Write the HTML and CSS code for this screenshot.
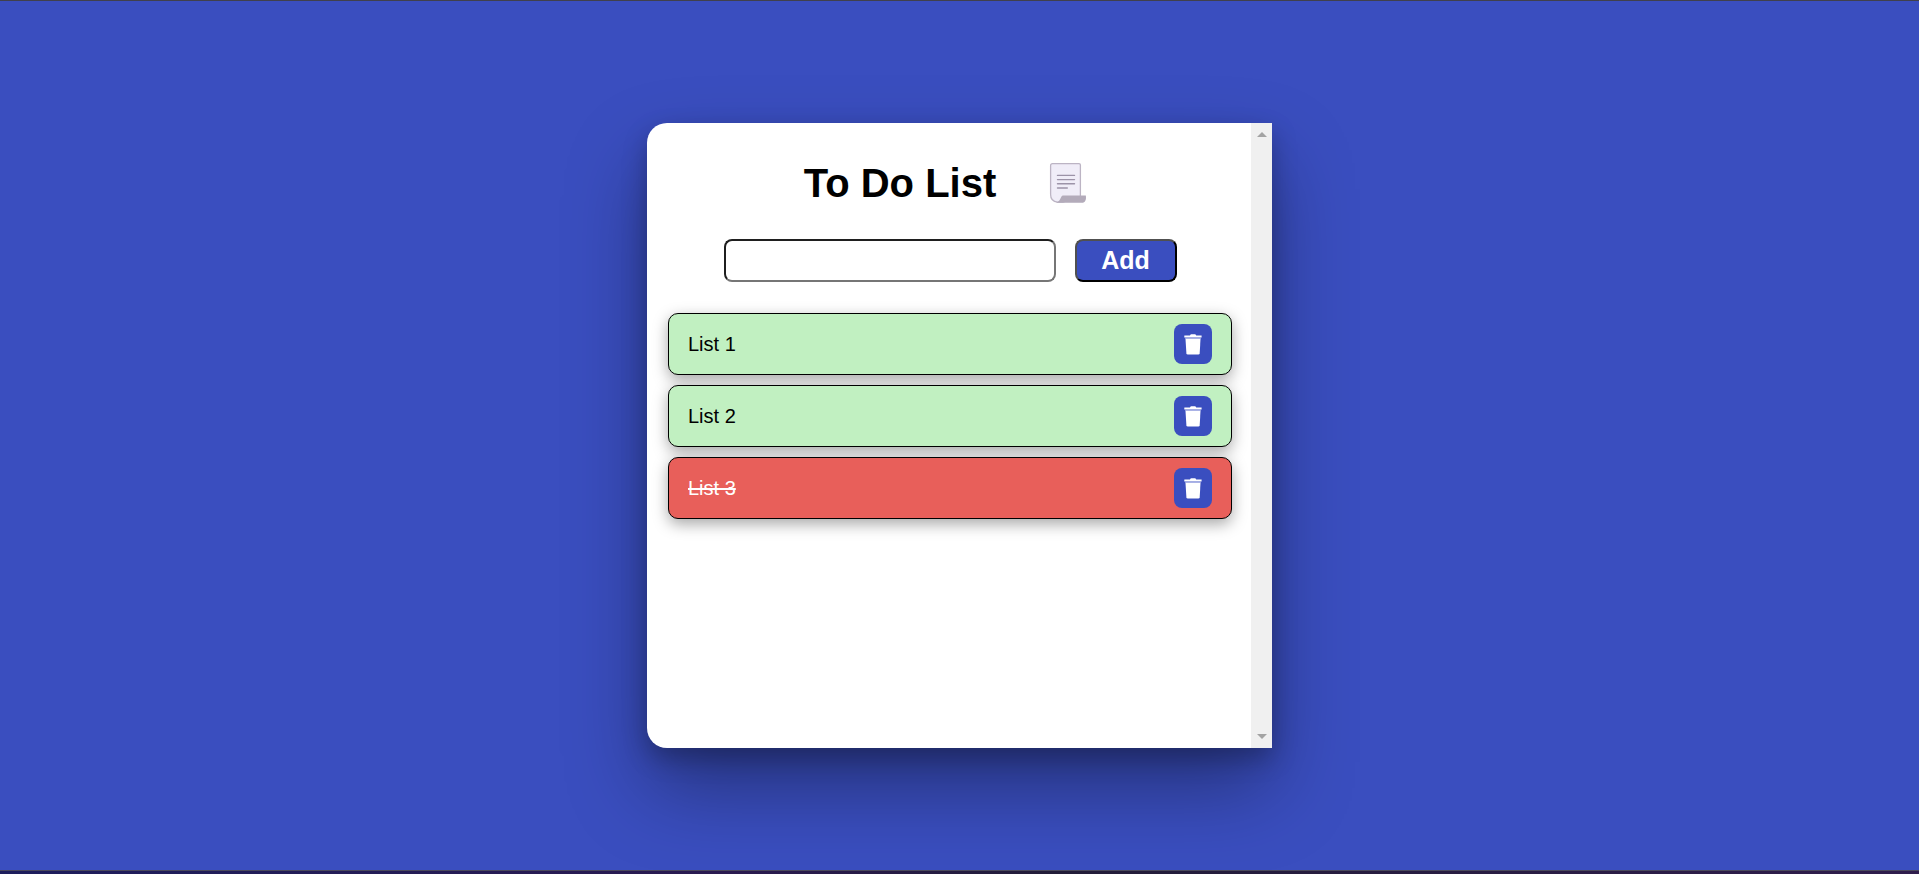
FILE: index.html
```html
<!DOCTYPE html>
<html lang="en">
<head>
<meta charset="utf-8">
<meta name="viewport" content="width=device-width, initial-scale=1">
<title>To Do List</title>
<link rel="stylesheet" href="styles.css">
</head>
<body>
<svg class="sprite" aria-hidden="true">
  <symbol id="trash" viewBox="0 0 18 21">
    <path d="M0.500 1.500H6Q6.400 0.300 7.400 0.300H10.800Q11.800 0.300 12.200 1.500H17.600V3.500H0.300V1.800Z" fill="#fff"/>
    <path d="M1.200 3.500H16.800V5H1.200Z" fill="#aab2e6"/>
    <path d="M1.500 5H16.500L15.700 19.200Q15.600 20.500 14.300 20.500H3.800Q2.500 20.500 2.400 19.200Z" fill="#fff"/>
  </symbol>
</svg>
<main class="page">
  <section class="card">
    <div class="content">
      <header class="title">
        <h1 class="heading">To Do List</h1>
        <svg class="scroll-icon" viewBox="0 0 50 50" aria-hidden="true">
          <path d="M6.600 5.600H33Q34.400 5.600 34.400 7V38.500L17 44.200H11.500Q4.600 43.500 4.600 36.500V7.600Q4.600 5.600 6.600 5.600Z" fill="#f0edf8" stroke="#bcb4c4" stroke-width="1.300"/>
          <path d="M10 44.300C14.500 44.300 14.500 37.400 17 37.400H39.800C40.600 41.500 39 44.800 36 44.800H11Z" fill="#b3abba"/>
          <path d="M11.500 17.400H28.500M11.500 21.600H28.500M11.500 25.700H28.500M11.500 30H21.300" stroke="#9c93a8" stroke-width="1.400" stroke-linecap="round"/>
        </svg>
      </header>
      <form class="add-form">
        <input class="task-input" type="text" aria-label="New task">
        <button class="add-button" type="button">Add</button>
      </form>
      <ul class="tasks">
        <li class="task">
          <span>List 1</span>
          <button class="delete" type="button" aria-label="Delete List 1"><svg class="trash"><use href="#trash"/></svg></button>
        </li>
        <li class="task">
          <span>List 2</span>
          <button class="delete" type="button" aria-label="Delete List 2"><svg class="trash"><use href="#trash"/></svg></button>
        </li>
        <li class="task done">
          <span>List 3</span>
          <button class="delete" type="button" aria-label="Delete List 3"><svg class="trash"><use href="#trash"/></svg></button>
        </li>
      </ul>
    </div>
    <div class="scrollbar" aria-hidden="true">
      <svg class="arrow" viewBox="0 0 10 5"><path d="M0 5L5 0L10 5Z"/></svg>
      <svg class="arrow" viewBox="0 0 10 5"><path d="M0 0L5 5L10 0Z"/></svg>
    </div>
  </section>
</main>
<div class="bottom-edge"></div>
</body>
</html>
```

FILE: styles.css
```css
* {
  box-sizing: border-box;
}

body {
  margin: 0;
  min-height: 100vh;
  display: flex;
  flex-direction: column;
  border-top: 1px solid #40404c;
  background: #3a4ebf;
  font-family: "Liberation Sans", Arial, sans-serif;
}

.sprite {
  display: none;
}

.page {
  flex: 1;
  display: flex;
  align-items: center;
  justify-content: center;
}

.card {
  display: flex;
  width: 100%;
  max-width: 625px;
  min-height: 625px;
  background: #fff;
  border-radius: 20px 0 0 20px;
  box-shadow: 0 10px 24px rgba(0, 0, 0, 0.25), 0 40px 80px rgba(0, 0, 0, 0.35);
}

.content {
  flex: 1;
  display: flex;
  flex-direction: column;
  gap: 31px;
  padding: 35px 19px 35px 21px;
}

.title {
  display: flex;
  align-items: center;
  justify-content: center;
  gap: 50px;
}

.heading {
  margin: 0;
  font-size: 40px;
  line-height: 50px;
}

.scroll-icon {
  width: 50px;
  height: 50px;
  fill: none;
}

.add-form {
  display: flex;
  justify-content: center;
  gap: 19px;
}

.task-input {
  width: 332px;
  min-width: 0;
  height: 43px;
  padding: 0 10px;
  border: 2px solid;
  border-color: #1f1f1f #767676 #767676 #1f1f1f;
  border-radius: 8px;
  background: #fff;
  font: inherit;
  font-size: 20px;
}

.add-button {
  width: 102px;
  height: 43px;
  padding: 0;
  border: 2px solid;
  border-color: #505050 #000 #000 #505050;
  border-radius: 8px;
  background: #3a4ebf;
  color: #fff;
  font: inherit;
  font-size: 25px;
  font-weight: bold;
}

.tasks {
  display: flex;
  flex-direction: column;
  gap: 10px;
  margin: 0;
  padding: 0;
  list-style: none;
}

.task {
  display: flex;
  align-items: center;
  justify-content: space-between;
  min-height: 62px;
  padding: 0 19px;
  border: 1px solid #000;
  border-radius: 10px;
  background: #c1f0c1;
  box-shadow: 0 5px 15px rgba(0, 0, 0, 0.35);
  font-size: 20px;
}

.done {
  background: #e85f5a;
  color: #fff;
}

.done span {
  text-decoration: line-through 2px;
}

.delete {
  display: grid;
  place-items: center;
  width: 38px;
  height: 40px;
  padding: 0;
  border: 0;
  border-radius: 8px;
  background: #3a4ebf;
}

.trash {
  width: 18px;
  height: 21px;
}

.scrollbar {
  display: flex;
  flex-direction: column;
  align-items: center;
  justify-content: space-between;
  width: 21px;
  padding: 9px 0;
  background: #f0f0f0;
}

.arrow {
  width: 10px;
  height: 5px;
  fill: #a3a3a3;
}

.bottom-edge {
  height: 4px;
  border-top: 1px solid #4a4a5c;
  background: linear-gradient(90deg, #1d1d5c, #2a1a50 38%, #221c38 55%, #2f1c4c);
}
```
